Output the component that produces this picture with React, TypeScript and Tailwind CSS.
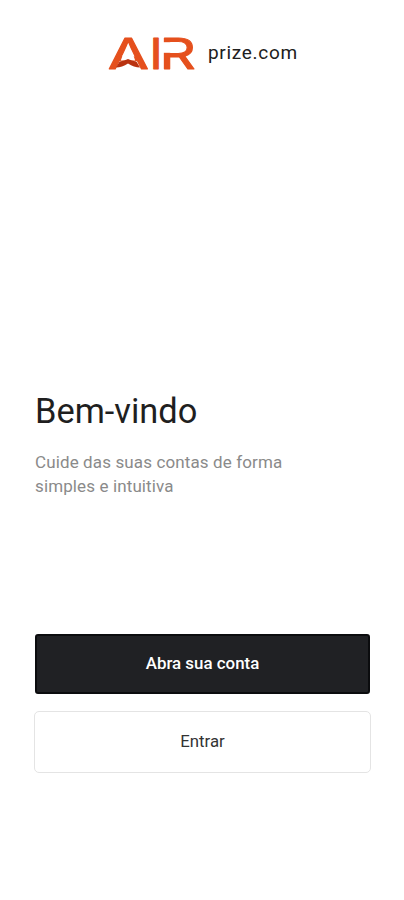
interface ActionButtonProps {
    label: string;
    className: string;
}

function ActionButton({ label, className }: ActionButtonProps) {
    return (
        <button type="button" className={`flex items-center justify-center ${className}`}>
            {label}
        </button>
    );
}

function BrandMark() {
    return (
        <svg
            width="88"
            height="34"
            viewBox="0 0 88 34"
            role="img"
            aria-label="AIR"
            className="shrink-0 overflow-visible fill-[#e5501d] stroke-[#e5501d] font-['Inter',sans-serif] text-[42.5px] font-normal"
            strokeWidth="0.9"
            strokeLinejoin="round"
        >
            <text x="-0.2" y="31.8" textLength="41.2" lengthAdjust="spacingAndGlyphs">A</text>
            <text x="42.3" y="31.8" className="font-medium">I</text>
            <text x="51.6" y="31.8" textLength="36.2" lengthAdjust="spacingAndGlyphs">R</text>

            <g stroke="none">
                {/* Open the counter of the A down to the wing */}
                <path className="fill-white" d="M14.6 18.5 H25.4 L27.2 23.5 H12.8 Z" />
                {/* Wing */}
                <path
                    className="fill-[#b93210]"
                    d="M11.6 24.4 C15 24 17.5 23.2 20 22 C22.5 23.2 25 24 28.4 24.4 L32 30.4 C28 30.2 24 29 20 26.4 C16 29 12 30.2 8 30.4 Z"
                />
                {/* Break in the stem of the R */}
                <rect className="fill-white" x="54" y="5.2" width="9" height="10.6" />
            </g>
        </svg>
    );
}

export default function App() {
    return (
        <main className="flex h-[900px] w-[404px] flex-col bg-white pr-[34px] pl-[35px] font-['Roboto',sans-serif] text-[#202124]">
            <header className="flex h-[72px] items-end gap-3 pb-px pl-[73px]">
                <BrandMark />
                <span className="mb-1.5 text-[19px] leading-6 tracking-[0.7px] text-[#202020]">prize.com</span>
            </header>

            <section className="mt-[317px]">
                <h1 className="text-[34.4px] leading-[44px] font-normal text-[#1f1f1f]">Bem-vindo</h1>
                <p className="mt-[17px] text-[17px] leading-6 tracking-[0.12px] text-[#8a8a8a]">
                    Cuide das suas contas de forma
                    <br />
                    simples e intuitiva
                </p>
            </section>

            <div className="mt-[136px] flex flex-col gap-[17px]">
                <ActionButton
                    label="Abra sua conta"
                    className="h-[60px] rounded-[3px] border-2 border-[#0b0c0e] bg-[#202124] text-[16.9px] font-medium text-white"
                />
                <ActionButton
                    label="Entrar"
                    className="-mx-px h-[62px] rounded-[5px] border border-[#e4e4e4] bg-white text-[16.8px] text-[#333333]"
                />
            </div>
        </main>
    );
}
